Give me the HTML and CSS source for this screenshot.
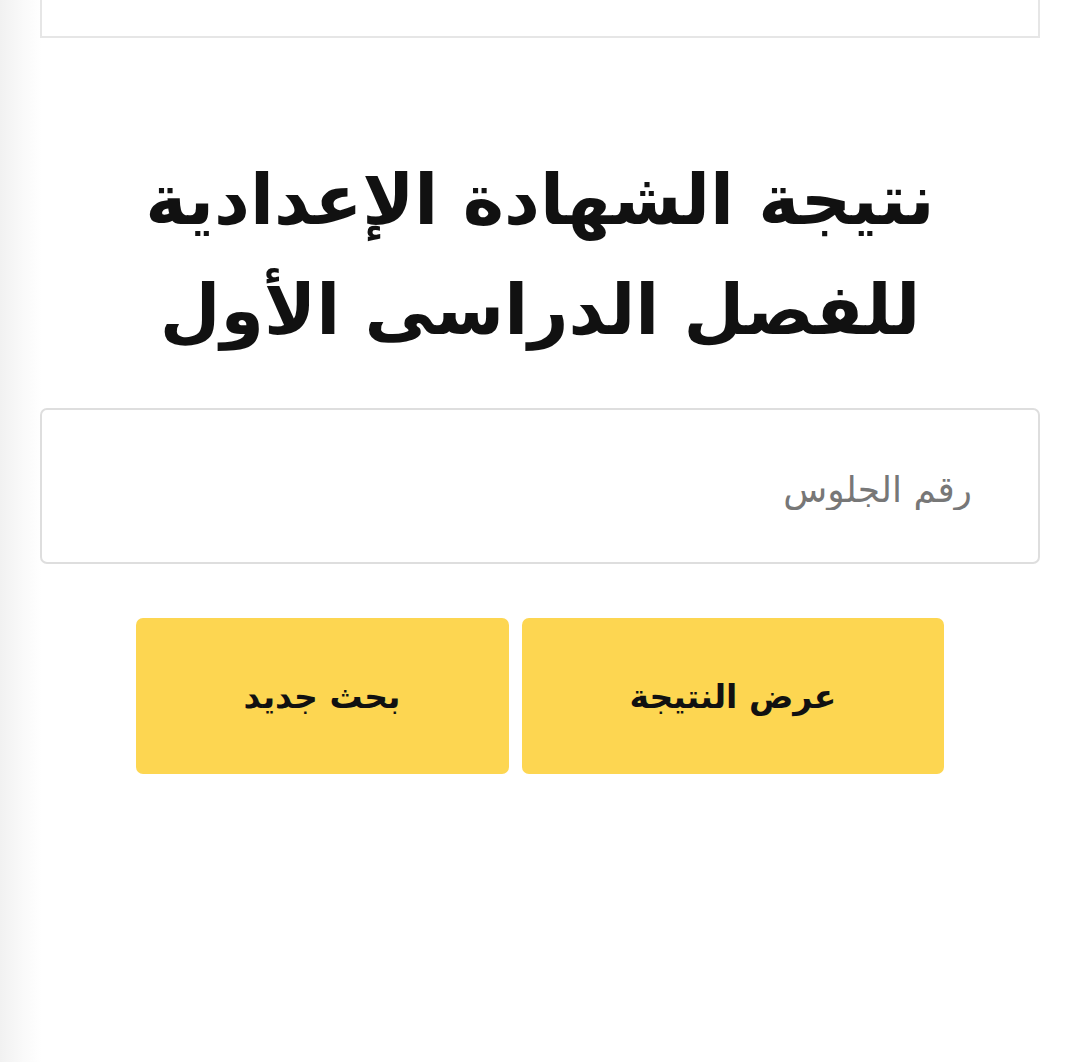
FILE: index.html
```html
<!DOCTYPE html>
<html lang="ar" dir="rtl">
<head>
    <meta charset="UTF-8">
    <meta name="viewport" content="width=device-width, initial-scale=1.0">
    <title>نتيجة الشهادة الإعدادية</title>
    <link rel="stylesheet" href="styles.css">
</head>
<body>
    <div class="page">
        <div class="top-box"></div>

        <h1>نتيجة الشهادة الإعدادية<br>للفصل الدراسى الأول</h1>

        <form class="result-form">
            <input type="text" id="seatInput" placeholder="رقم الجلوس">
            <div class="actions">
                <button type="button" class="btn">عرض النتيجة</button>
                <button type="reset" class="btn">بحث جديد</button>
            </div>
        </form>
    </div>
</body>
</html>
```

FILE: styles.css
```css
* {
    margin: 0;
    padding: 0;
    box-sizing: border-box;
    font-family: 'DejaVu Sans', 'Noto Sans', sans-serif;
}

body {
    background: linear-gradient(to right, #f1f1f1 0, #fafafa 24px, #fff 42px);
    color: #111;
    min-height: 100vh;
}

.page {
    width: 1000px;
    margin-right: 40px;
}

.top-box {
    height: 38px;
    border: 2px solid #e6e6e6;
    border-top: 0;
    background: #fff;
}

h1 {
    text-align: center;
    font-size: 70px;
    font-weight: bold;
    line-height: 110px;
    margin-top: 107px;
    color: #111;
}

.result-form {
    margin-top: 43px;
}

#seatInput {
    display: block;
    width: 100%;
    height: 156px;
    border: 2px solid #dedede;
    border-radius: 7px;
    padding: 6px 66px 0;
    font-size: 36px;
    color: #333;
    background: #fff;
    outline: none;
}

#seatInput::placeholder {
    color: #777;
}

.actions {
    display: flex;
    justify-content: center;
    gap: 13px;
    margin-top: 54px;
}

.btn {
    height: 156px;
    padding: 0 108px;
    background: #fdd651;
    border: 0;
    border-radius: 7px;
    font-size: 33px;
    font-weight: bold;
    color: #111;
    cursor: pointer;
}
```
